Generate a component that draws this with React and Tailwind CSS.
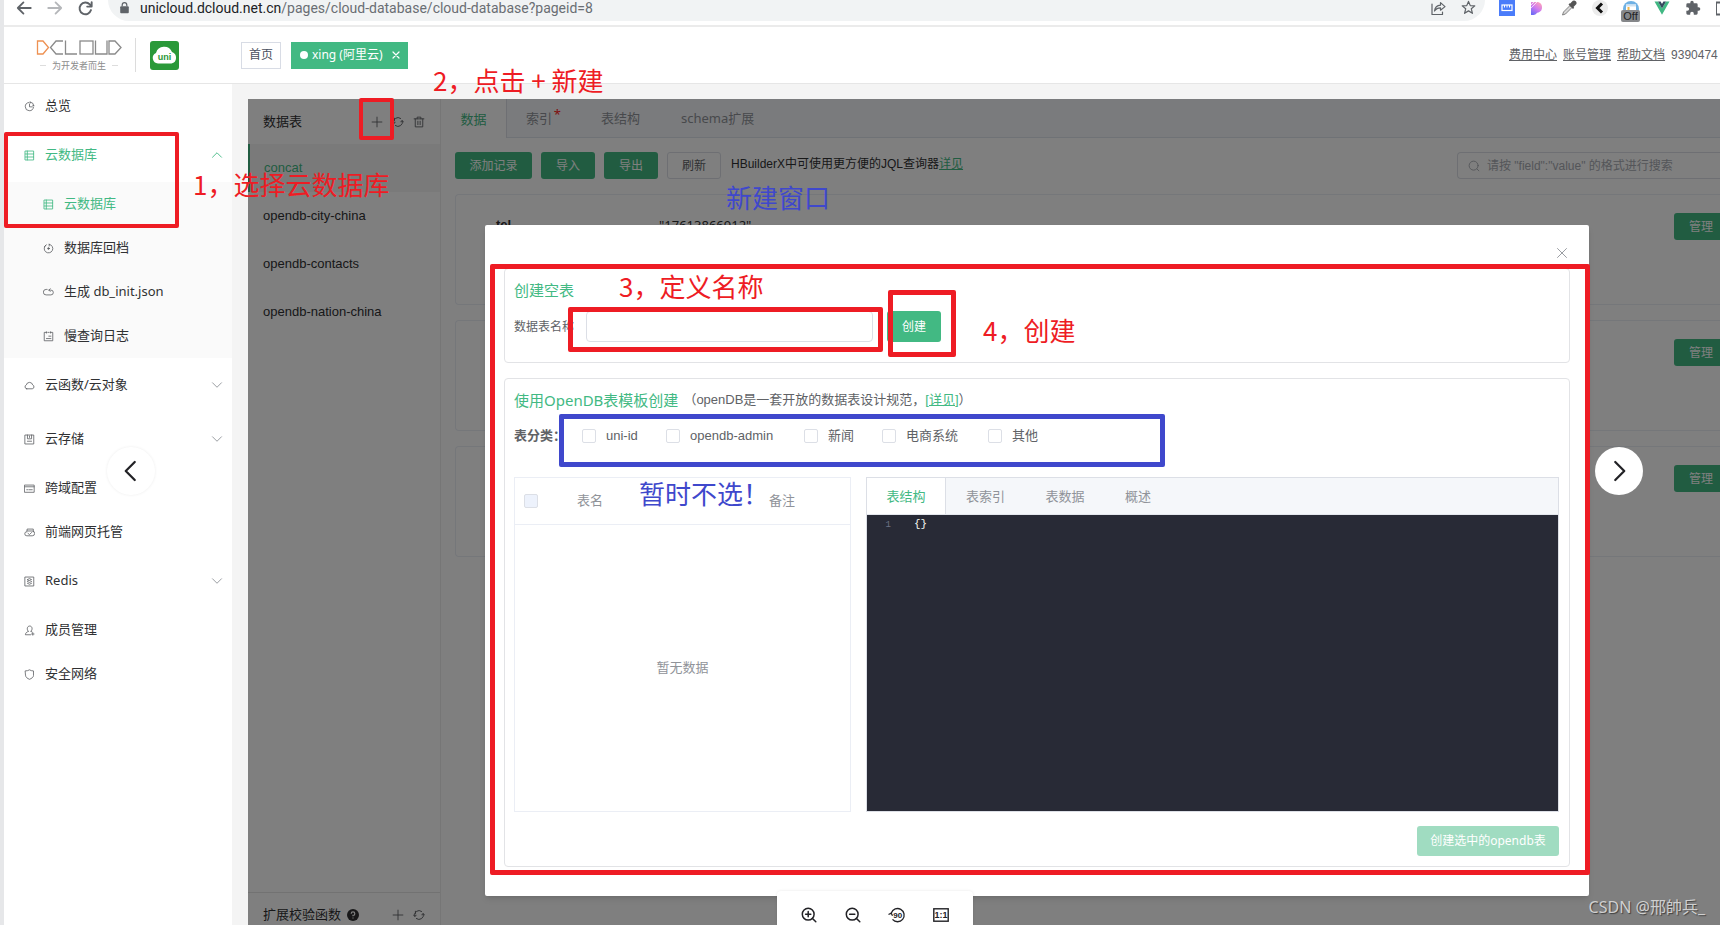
const cjk = `font-['Noto_Sans','Noto_Sans_CJK_SC',sans-serif]`;
const arial = `font-['Liberation_Sans','Noto_Sans_CJK_SC',sans-serif]`;

function Svg({ size = 'size-[12px]', sw = 1.2, box = 16, className = '', children }) {
  return (
    <svg viewBox={`0 0 ${box} ${box}`} className={`${size} shrink-0 ${className}`} fill="none" stroke="currentColor" strokeWidth={sw} strokeLinecap="round" strokeLinejoin="round" aria-hidden="true">
      {children}
    </svg>
  );
}

const icons = {
  clock: <><path d="M7 2.2A6 6 0 1 0 13.8 9" /><path d="M9 1.5A5.8 5.8 0 0 1 14.3 6.8" /><path d="M8 4.5V8.5H12" /><path d="M9 1.5V3M14.3 6.8H12.8" /></>,
  list: <><rect x="2" y="1.5" width="12" height="13" /><path d="M2 5.8H14M2 10.2H14M4.8 1.5V14.5" /></>,
  restore: <><path d="M4.6 2.7A6.3 6.3 0 1 0 9 1.8" /><path d="M9 1.8V4.4M2 5.5L4.5 3" /><circle cx="8" cy="8" r="1.2" fill="currentColor" /></>,
  loop: <><path d="M6 3.5H4.5A3.2 3.2 0 0 0 4.5 11.5H11.5A3.2 3.2 0 0 0 11.5 4.5H8.5" /><path d="M10.5 2.5L8.5 4.5L10.5 6.5" /></>,
  log: <><path d="M5 2H1.8V14.2H14.2V2H11M7 2H9" /><path d="M5 1.2V3M11 1.2V3M8.5 7.5H11.5M5 11H11.5" /></>,
  cloud: <path d="M4 12.8H12A2.9 2.9 0 0 0 12.6 7.2A4.7 4.7 0 0 0 3.4 7.2A2.9 2.9 0 0 0 4 12.8Z" />,
  storage: <><rect x="1.8" y="1.5" width="12.4" height="13" /><path d="M5 1.5V7H11V1.5M5 10.5H11M8 3V5" /></>,
  cross: <><rect x="1.2" y="3" width="13.6" height="10.5" /><path d="M1.2 5.5H14.8M4 9.8H5.2M7 9.8H12" /></>,
  host: <><path d="M4.5 5V3H13.5V7M4 5.8H12A2.8 2.8 0 0 1 12 12.8H4.2A3 3 0 0 1 4 6.8" /><path d="M5.8 9.3L8 11L11 8" /></>,
  redis: <><rect x="1.8" y="1.5" width="12.4" height="13" /><path d="M5 5.2L8 3.8L11 5.2L8 6.6ZM5 8L8 9.4L11 8M5 10.6L8 12L11 10.6" /></>,
  member: <><path d="M6.2 9.3C3.5 6.5 4.5 1.5 8.3 1.5S13 6.5 10.2 9.3" /><path d="M6.2 9.3C3.6 10.5 2.2 11.6 2 14.2H9.5M10.2 9.3L12 10.4M12.8 11.4V14.8M11 13.1H14.6" /></>,
  shield: <path d="M2.2 2.8Q5.5 2.8 8 1.2Q10.5 2.8 13.8 2.8V9.5C13.8 12 11 13.8 8 15C5 13.8 2.2 12 2.2 9.5Z" />,
};

function NavItem({ icon, label, parent, sub, active, open }) {
  return (
    <li>
      <a href="#" className={`flex items-center pr-[9px] text-[13px] ${parent ? 'h-[54px]' : 'h-[44px]'} ${sub ? 'pl-[39px]' : 'pl-[20px]'} ${active ? 'text-[#42b983]' : 'text-[#303133]'}`}>
        <Svg size="size-[11px]" className={active ? '' : 'text-[#606266]'}>{icons[icon]}</Svg>
        <span className="ml-[10px]">{label}</span>
        {parent && (
          <Svg size="size-[12px]" className={`ml-auto ${active ? '' : 'text-[#909399]'}`}>
            {open ? <path d="M2 11L8 5L14 11" /> : <path d="M2 5L8 11L14 5" />}
          </Svg>
        )}
      </a>
    </li>
  );
}

function BrowserBar() {
  return (
    <div className="flex h-[27px] shrink-0 items-start border-b-2 border-[#ebebeb] bg-white pl-[11px] text-[#5f6368]">
      <div className="flex h-[16px] items-center gap-[13px]">
        <button aria-label="后退"><Svg size="size-[18px]" sw={1.6}><path d="M14 8H2.5M7.5 3L2.5 8L7.5 13" /></Svg></button>
        <button aria-label="前进" className="text-[#b5b7ba]"><Svg size="size-[18px]" sw={1.6}><path d="M2 8H13.5M8.5 3L13.5 8L8.5 13" /></Svg></button>
        <button aria-label="刷新页面"><Svg size="size-[17px]" sw={1.8}><path d="M13.2 9.5A5.5 5.5 0 1 1 12 4.2L13.5 5.8M13.8 2V6.2H9.6" /></Svg></button>
      </div>
      <div className="ml-[14px] flex h-[21px] flex-1 items-start rounded-b-full bg-[#f1f3f4] pr-[9px] pl-[12px]">
        <svg viewBox="0 0 10 14" className="mt-[2px] h-[12px] w-[9px] fill-[#5f6368]" aria-hidden="true"><path d="M1 5H9A1 1 0 0 1 10 6V12A1 1 0 0 1 9 13H1A1 1 0 0 1 0 12V6A1 1 0 0 1 1 5Z" /><path d="M2.3 5V3.4A2.7 2.7 0 0 1 7.7 3.4V5" fill="none" stroke="#5f6368" strokeWidth="1.4" /></svg>
        <span className="ml-[11px] font-[Roboto,sans-serif] text-[14px] leading-[17px] text-[#6a6e73]"><span className="text-[#202124]">unicloud.dcloud.net.cn</span>/pages/cloud-database/cloud-database?pageid=8</span>
        <button aria-label="分享" className="ml-auto"><Svg size="size-[16px]" sw={1.2}><path d="M2 4V14.5H12.5V12" /><path d="M4.5 11C5 7 7.5 5.3 10.5 5.2V2.6L15 6.6L10.5 10.2V7.8C8 7.8 6 8.6 4.5 11Z" /></Svg></button>
        <button aria-label="收藏" className="ml-[15px]"><Svg size="size-[15px]" sw={1.3}><path d="M8 1.5L9.9 6L14.7 6.3L11 9.4L12.2 14.2L8 11.6L3.8 14.2L5 9.4L1.3 6.3L6.1 6Z" /></Svg></button>
      </div>
      <div className="ml-[14px] flex w-[221px] shrink-0 items-start gap-[15px] overflow-hidden">
        <svg viewBox="0 0 16 16" className="size-[16px] shrink-0" aria-hidden="true"><rect width="16" height="16" fill="#4a7cfa" /><rect x="3" y="5" width="10" height="5.5" fill="none" stroke="#fff" strokeWidth="1.2" /><path d="M5.5 5V7.5M8 5V7.5M10.5 5V7.5" stroke="#fff" /></svg>
        <svg viewBox="0 0 16 16" className="size-[16px] shrink-0" aria-hidden="true">
          <defs><linearGradient id="pg" x1="0.2" y1="1" x2="0.8" y2="0"><stop offset="0" stopColor="#6b6bf5" /><stop offset="0.5" stopColor="#d07bf0" /><stop offset="1" stopColor="#ffa6b8" /></linearGradient></defs>
          <path d="M1 2H8A5.6 5.6 0 0 1 8.5 12.6C6 12.6 6.5 15 3.5 15H1Z" fill="url(#pg)" /><path d="M1 5L4.5 1.5M1 8L7.5 1.5" stroke="#fff" strokeWidth="0.7" />
        </svg>
        <svg viewBox="0 0 16 16" className="size-[16px] shrink-0" aria-hidden="true"><path d="M1.5 15L2.5 12L9 5.5L11 7.5L4.5 14Z" fill="#d8d8d8" stroke="#777" strokeWidth="0.9" /><path d="M7.5 4.5L12 9L13.2 7.8L12.5 7L15.2 4.2A2.5 2.5 0 0 0 11.8 0.8L9.2 3.5L8.7 3.2Z" fill="#555" /></svg>
        <svg viewBox="0 0 16 16" className="size-[16px] shrink-0" aria-hidden="true"><circle cx="8" cy="8" r="8" fill="#ececec" /><path d="M10 3.5L5.5 8L10 12.5" fill="none" stroke="#111" strokeWidth="3" /></svg>
        <div className="relative h-[22px] w-[16px] shrink-0">
          <svg viewBox="0 0 16 16" className="size-[16px]" aria-hidden="true"><circle cx="8" cy="9" r="8" fill="#6fb1e4" /><rect x="3" y="4.5" width="10" height="8" fill="#fff" /><path d="M3 5.5H13" stroke="#cfe2f2" strokeWidth="2" /><rect x="4.5" y="7" width="2" height="3" fill="#f2b84b" /></svg>
          <span className={`absolute top-[10px] -left-[2px] w-[19px] rounded-[2px] bg-[#85878a] text-center text-[11px] leading-[12px] text-[#222] ${arial}`}>Off</span>
        </div>
        <svg viewBox="0 0 16 16" className="size-[16px] shrink-0" aria-hidden="true"><path d="M0.5 1.5H4L8 8.5L12 1.5H15.5L8 14.8Z" fill="#41b883" /><path d="M4 1.5H6.6L8 4L9.4 1.5H12L8 8.5Z" fill="#35495e" /></svg>
        <svg viewBox="0 0 24 24" className="size-[16px] shrink-0 fill-[#5f6368]" aria-hidden="true"><path d="M20.5 11H19V7a2 2 0 0 0-2-2h-4V3.5a2.5 2.5 0 0 0-5 0V5H4a2 2 0 0 0-2 2v3.8h1.5a2.7 2.7 0 0 1 0 5.4H2V20a2 2 0 0 0 2 2h3.8v-1.5a2.7 2.7 0 0 1 5.4 0V22H17a2 2 0 0 0 2-2v-4h1.5a2.5 2.5 0 0 0 0-5z" /></svg>
        <svg viewBox="0 0 16 16" className="size-[16px] shrink-0" aria-hidden="true"><rect x="0" y="2.5" width="13" height="12" fill="none" stroke="#5f6368" strokeWidth="2" /></svg>
      </div>
    </div>
  );
}

function Header() {
  return (
    <header className="flex h-[57px] shrink-0 items-center border-b border-[#e6e6e6] bg-white pl-[32px]">
      <div className="flex w-[86px] flex-col items-center">
        <svg viewBox="0 0 86 17" className="h-[17px] w-[86px]" fill="none" stroke="#8a8a8a" strokeWidth="1.3" aria-hidden="true">
          <path d="M1.5 2H7L12.5 8.5L7 15H1.5Z" stroke="#ee9152" />
          <path d="M27 2H20L14.5 8.5L20 15H27" /><path d="M29.5 1.5V15H41" /><rect x="44" y="2" width="13" height="13" /><path d="M59.5 1.5V15H71V1.5" /><path d="M73 15V2H79L85 8.5L79 15Z" />
        </svg>
        <div className={`mt-[3px] flex items-center gap-[6px] text-[9px] leading-[13px] text-[#8c8c8c] ${cjk}`}>
          <i className="h-px w-[6px] bg-[#ddd]" />为开发者而生<i className="h-px w-[6px] bg-[#ddd]" />
        </div>
      </div>
      <div className="ml-[13px] h-[34px] w-px bg-[#dcdcdc]" />
      <svg viewBox="0 0 29 29" className="ml-[14px] size-[29px]" aria-hidden="true">
        <rect width="29" height="29" rx="3" fill="#2a9939" />
        <path d="M8 22.5A5.5 5.5 0 0 1 6 12A8.5 8.5 0 0 1 22 11A6 6 0 0 1 21.5 22.5Z" fill="#fff" />
        <text x="14.5" y="19" textAnchor="middle" fontSize="9" fontWeight="700" fill="#2a9939" fontFamily="Liberation Sans, sans-serif">uni</text>
      </svg>
      <nav className="ml-[62px] flex gap-[10px] text-[12px]">
        <button className="h-[27px] w-[40px] border border-[#d8dce5] text-[#495060]">首页</button>
        <button className="flex h-[27px] w-[117px] items-center border border-[#42b983] bg-[#42b983] pl-[8px] text-white">
          <i className="mr-[4px] size-[8px] rounded-full bg-white" />xing (阿里云)
          <Svg size="size-[8px]" sw={2.4} className="ml-[9px]"><path d="M2 2L14 14M14 2L2 14" /></Svg>
        </button>
      </nav>
      <nav className="ml-auto flex w-[211px] shrink-0 gap-[6px] overflow-hidden text-[12px] whitespace-nowrap text-[#606266]">
        <a href="#" className="underline">费用中心</a>
        <a href="#" className="underline">账号管理</a>
        <a href="#" className="underline">帮助文档</a>
        <span className={arial}>9390474</span>
      </nav>
    </header>
  );
}

function Sidebar() {
  return (
    <aside className="w-[228px] shrink-0 bg-white">
      <ul>
        <NavItem icon="clock" label="总览" />
        <NavItem icon="list" label="云数据库" parent active open />
      </ul>
      <ul className="bg-[#fafafa]">
        <NavItem icon="list" label="云数据库" sub active />
        <NavItem icon="restore" label="数据库回档" sub />
        <NavItem icon="loop" label="生成 db_init.json" sub />
        <NavItem icon="log" label="慢查询日志" sub />
      </ul>
      <ul>
        <NavItem icon="cloud" label="云函数/云对象" parent />
        <NavItem icon="storage" label="云存储" parent />
        <NavItem icon="cross" label="跨域配置" />
        <NavItem icon="host" label="前端网页托管" />
        <NavItem icon="redis" label="Redis" parent />
        <NavItem icon="member" label="成员管理" />
        <NavItem icon="shield" label="安全网络" />
      </ul>
    </aside>
  );
}

const Plus = () => <Svg size="size-[12px]"><path d="M8 1.5V14.5M1.5 8H14.5" /></Svg>;
const Refresh = () => <Svg size="size-[12px]" sw={1.3}><path d="M2.2 9.5A6 6 0 0 1 11.5 3.2M13.8 6.5A6 6 0 0 1 4.5 12.8" /><path d="M3.2 3V6M0.8 8L2.2 9.8L4.2 8.6M15.2 8L13.8 6.2L11.8 7.4" /></Svg>;

function TableList() {
  return (
    <section className="flex w-[193px] shrink-0 flex-col border-r border-[#ececec] text-[13px] text-[#303133]">
      <div className="flex h-[45px] shrink-0 items-center pr-[15px] pl-[15px]">
        数据表
        <div className="ml-auto flex gap-[9px] text-[#606266]">
          <button aria-label="新建数据表"><Plus /></button>
          <button aria-label="刷新数据表"><Refresh /></button>
          <button aria-label="删除数据表"><Svg size="size-[12px]"><path d="M1.5 3.8H14.5M5.5 3.8V1.5H10.5V3.8M3 3.8V14.5H13V3.8M6.5 7V11.5M9.5 7V11.5" /></Svg></button>
        </div>
      </div>
      <ul className={`flex-1 ${arial}`}>
        <li><a href="#" className="flex h-[48px] items-center border-l-2 border-[#42b983] bg-[#f5f5f5] pl-[14px] text-[#42b983]">concat</a></li>
        {['opendb-city-china', 'opendb-contacts', 'opendb-nation-china'].map((n) => (
          <li key={n}><a href="#" className="flex h-[48px] items-center pl-[15px]">{n}</a></li>
        ))}
      </ul>
      <div className="flex h-[33px] shrink-0 items-center border-t border-[#e4e4e4] pt-[12px] pr-[15px] pl-[15px]">
        扩展校验函数
        <svg viewBox="0 0 16 16" className="ml-[6px] size-[12px]" aria-hidden="true"><circle cx="8" cy="8" r="8" fill="#303133" /><path d="M5.6 6.2A2.4 2.4 0 1 1 8 8.6V9.8M8 11.3V12.8" fill="none" stroke="#fff" strokeWidth="1.6" /></svg>
        <div className="ml-auto flex gap-[9px] text-[#606266]">
          <button aria-label="新建函数"><Plus /></button>
          <button aria-label="刷新函数"><Refresh /></button>
        </div>
      </div>
    </section>
  );
}

const green = 'h-[27px] rounded-[3px] bg-[#42b983] text-[12px] text-white';

function DataPanel() {
  return (
    <section className="flex min-w-0 flex-1 flex-col">
      <div role="tablist" className="flex h-[39px] shrink-0 border-b border-[#dfe4ed] bg-[#f5f7fa] text-[13px] text-[#909399]">
        <button role="tab" aria-selected="true" className="-mb-px w-[66px] border-r border-[#dcdfe6] bg-white pt-[2px] text-[#42b983]">数据</button>
        <button role="tab" className="relative ml-[19px] pt-[2px]">索引<span className="absolute top-[6px] -right-[9px] text-[#ff2020]">*</span></button>
        <button role="tab" className="ml-[49px] pt-[2px]">表结构</button>
        <button role="tab" className="ml-[41px] pt-[2px]">schema扩展</button>
      </div>
      <div className="flex flex-1 flex-col gap-[15px] overflow-hidden pt-[14px] pl-[14px]">
        <div className="flex h-[27px] shrink-0 gap-[9px]">
          <button className={`${green} w-[77px]`}>添加记录</button>
          <button className={`${green} w-[54px]`}>导入</button>
          <button className={`${green} w-[54px]`}>导出</button>
          <button className="h-[27px] w-[54px] rounded-[3px] border border-[#dcdfe6] text-[12px] text-[#606266]">刷新</button>
          <p className={`ml-[1px] text-[12px] leading-[24px] text-[#303133] ${arial}`}>HBuilderX中可使用更方便的JQL查询器<a href="#" className="text-[#42b983] underline">详见</a></p>
          <label className="ml-auto flex w-[263px] items-center rounded-l-[4px] border border-r-0 border-[#dcdfe6] pl-[10px] text-[#a8abb2]">
            <Svg size="size-[12px]"><circle cx="7.5" cy="7.5" r="6" /><path d="M12 12L14.5 14.5" /></Svg>
            <input aria-label="搜索" placeholder={'请按 "field":"value" 的格式进行搜索'} className={`ml-[7px] w-full bg-transparent text-[12px] outline-none placeholder:text-[#a8abb2] ${arial}`} />
          </label>
        </div>
        {[0, 1, 2].map((i) => (
          <article key={i} className="flex h-[111px] shrink-0 items-start justify-between rounded-l-[4px] border border-r-0 border-[#ebeef5] pt-[18px] pl-[40px] text-[13px]">
            <dl className="flex leading-[24px] text-[#303133]">
              {i === 0 && <><dt className={`w-[163px] font-bold ${arial}`}>tel</dt><dd>"17613866912"</dd></>}
            </dl>
            <button className="h-[27px] w-[46px] rounded-l-[3px] bg-[#42b983] pl-[15px] text-left text-[12px] text-white">管理</button>
          </article>
        ))}
      </div>
    </section>
  );
}

const check = 'size-[14px] shrink-0 appearance-none rounded-[2px] border border-[#dcdfe6]';

function Dialog() {
  const kinds = [['uni-id', 'w-[84px]'], ['opendb-admin', 'w-[138px]'], ['新闻', 'w-[78px]'], ['电商系统', 'w-[106px]'], ['其他', 'w-[60px]']];
  return (
    <div className="absolute inset-0 bg-black/50 pt-[126px] pr-[131px] pl-[237px]">
      <div role="dialog" aria-label="新建数据表" className="flex h-[671px] flex-col rounded-[2px] bg-white px-[19px] shadow-md">
        <div className="flex h-[43px] shrink-0 items-center justify-end pt-[12px]">
          <button aria-label="关闭" className="mr-[2px] text-[#909399]"><Svg size="size-[12px]"><path d="M2 2L14 14M14 2L2 14" /></Svg></button>
        </div>
        <section className="h-[95px] shrink-0 rounded-[4px] border border-[#e2e3e6] pt-[9px] pr-[10px] pl-[9px]">
          <h2 className="text-[15px] leading-[24px] text-[#42b983]">创建空表</h2>
          <div className="mt-[9px] flex h-[31px] items-center">
            <label htmlFor="tname" className="w-[72px] text-[12px] text-[#606266]">数据表名称</label>
            <input id="tname" className="h-[31px] w-[287px] rounded-[4px] border border-[#dcdfe6] px-[10px] text-[13px] outline-none" />
            <button className="ml-[14px] h-[31px] w-[54px] rounded-[3px] bg-[#42b983] text-[12px] text-white">创建</button>
          </div>
        </section>
        <section className="mt-[15px] flex h-[489px] shrink-0 flex-col rounded-[4px] border border-[#e2e3e6] pt-[9px] pr-[10px] pl-[9px]">
          <h2 className="flex gap-[5px] text-[15px] leading-[24px] text-[#42b983]">使用OpenDB表模板创建<span className={`text-[13px] text-[#606266] ${arial}`}>（openDB是一套开放的数据表设计规范，<a href="#" className="text-[#42b983] underline">[详见]</a>）</span></h2>
          <fieldset className="mt-[14px] flex h-[20px] items-center text-[13px] text-[#606266]">
            <legend className="float-left w-[68px] font-bold">表分类：</legend>
            {kinds.map(([k, w]) => (
              <label key={k} className={`flex items-center gap-[10px] whitespace-nowrap ${w} ${arial}`}><input type="checkbox" className={check} />{k}</label>
            ))}
          </fieldset>
          <div className="mt-[31px] flex h-[335px] gap-[15px]">
            <div className="flex w-[337px] shrink-0 flex-col border border-[#ebeef5]">
              <table className="w-full table-fixed text-left text-[13px] text-[#909399]">
                <thead><tr className="h-[46px] border-b border-[#ebeef5]">
                  <th className="w-[62px] pl-[9px]"><input type="checkbox" disabled aria-label="全选" className="block size-[14px] appearance-none rounded-[2px] border border-[#dcdfe6] bg-[#edf2fc]" /></th>
                  <th className="w-[192px] font-normal">表名</th><th className="font-normal">备注</th>
                </tr></thead>
              </table>
              <p className="flex flex-1 items-center justify-center text-[13px] text-[#909399]">暂无数据</p>
            </div>
            <div className="flex min-w-0 flex-1 flex-col border border-[#dcdfe6]">
              <div role="tablist" className="flex h-[37px] shrink-0 border-b border-[#e4e7ed] bg-[#f5f7fa] text-[13px] text-[#909399]">
                <button role="tab" aria-selected="true" className="w-[79px] border-r border-[#dcdfe6] bg-white pt-[2px] text-[#42b983]">表结构</button>
                <button role="tab" className="w-[79px] pt-[2px]">表索引</button>
                <button role="tab" className="w-[80px] pt-[2px]">表数据</button>
                <button role="tab" className="w-[66px] pt-[2px]">概述</button>
              </div>
              <pre className="flex-1 bg-[#282a36] font-['Liberation_Mono',monospace] text-[11px] leading-[19px] text-[#f8f8f2]"><span className="inline-block w-[24px] text-right text-[9px] text-[#6d7285]">1</span><code className="ml-[23px]">{'{}'}</code></pre>
            </div>
          </div>
          <button className="mt-[14px] h-[30px] w-[142px] self-end rounded-[3px] bg-[#a0dcc1] text-[12px] text-white">创建选中的opendb表</button>
        </section>
      </div>
    </div>
  );
}

function Note({ className, children }) {
  return <p className={`absolute font-['Noto_Sans_CJK_SC',sans-serif] text-[26px] leading-[32px] whitespace-nowrap ${className}`}>{children}</p>;
}

function Annotations() {
  return (
    <div className="pointer-events-none absolute inset-0">
      <div className="absolute top-[132px] left-[4px] h-[96px] w-[175px] rounded-[2px] border-[4px] border-[#ee1c24]" />
      <div className="absolute top-[98px] left-[359px] h-[42px] w-[35px] rounded-[2px] border-[4px] border-[#ee1c24]" />
      <div className="absolute top-[264px] right-[130px] left-[490px] h-[611px] rounded-[2px] border-[5px] border-[#ee1c24]" />
      <div className="absolute top-[307px] left-[568px] h-[45px] w-[315px] rounded-[2px] border-[5px] border-[#ee1c24]" />
      <div className="absolute top-[290px] left-[888px] h-[67px] w-[68px] rounded-[2px] border-[5px] border-[#ee1c24]" />
      <div className="absolute top-[414px] left-[559px] h-[53px] w-[606px] rounded-[2px] border-[5px] border-[#3f48cc]" />
      <Note className="top-[168px] left-[193px] text-[#ee1c24]">1，选择云数据库</Note>
      <Note className="top-[64px] left-[433px] text-[#ee1c24]">2，点击 + 新建</Note>
      <Note className="top-[270px] left-[619px] text-[#ee1c24]">3，定义名称</Note>
      <Note className="top-[314px] left-[983px] text-[#ee1c24]">4，创建</Note>
      <Note className="top-[181px] left-[726px] text-[#3f48cc]">新建窗口</Note>
      <Note className="top-[477px] left-[639px] text-[#3f48cc]">暂时不选！</Note>
    </div>
  );
}

function Viewer() {
  const round = 'absolute top-[447px] flex size-[48px] items-center justify-center rounded-full bg-white text-[#222226]';
  return (
    <>
      <button aria-label="上一张" className={`${round} left-[107px] shadow-[0_0_3px_rgba(0,0,0,0.08)]`}><Svg size="size-[24px]" sw={1.5}><path d="M10.5 2L4.5 8L10.5 14" /></Svg></button>
      <button aria-label="下一张" className={`${round} right-[77px]`}><Svg size="size-[24px]" sw={1.5}><path d="M5.5 2L11.5 8L5.5 14" /></Svg></button>
      <div className="absolute bottom-0 left-[777px] flex h-[34px] w-[196px] items-center gap-[28px] rounded-t-[4px] bg-white pt-[13px] pl-[24px] text-[#222226] shadow-[0_0_3px_rgba(0,0,0,0.1)]">
        <button aria-label="放大"><Svg size="size-[16px]" sw={1.5}><circle cx="7.2" cy="7.2" r="5.9" /><path d="M11.5 11.5L14.8 14.8M7.2 4.6V9.8M4.6 7.2H9.8" /></Svg></button>
        <button aria-label="缩小"><Svg size="size-[16px]" sw={1.5}><circle cx="7.2" cy="7.2" r="5.9" /><path d="M11.5 11.5L14.8 14.8M4.6 7.2H9.8" /></Svg></button>
        <button aria-label="旋转90度">
          <svg viewBox="0 0 16 16" className="size-[16px] overflow-visible" fill="none" stroke="currentColor" strokeWidth="1.3" aria-hidden="true"><path d="M2.3 6A6.6 6.6 0 1 1 3.5 12.4" /><path d="M-0.5 7.5L2.2 6.2L3.5 8.8" /><text x="8.8" y="11.2" textAnchor="middle" fontSize="8" fontWeight="700" fill="currentColor" stroke="none" fontFamily="Liberation Sans, sans-serif">90</text></svg>
        </button>
        <button aria-label="原始尺寸">
          <svg viewBox="0 0 16 16" className="size-[16px]" fill="none" stroke="currentColor" strokeWidth="1.4" aria-hidden="true"><rect x="0.8" y="1.8" width="14.4" height="12.4" /><text x="8" y="11.2" textAnchor="middle" fontSize="9" fontWeight="700" fill="currentColor" stroke="none" fontFamily="Liberation Sans, sans-serif">1:1</text></svg>
        </button>
      </div>
      <p className="absolute right-[15px] bottom-[6px] text-[16px] leading-[24px] text-[#d0d0d0] [text-shadow:1px_1px_1px_rgba(0,0,0,0.5)]">CSDN @邢帥兵_</p>
    </>
  );
}

export default function App() {
  return (
    <div className={`relative flex h-screen flex-col overflow-hidden border-l-4 border-[#e6e7e9] bg-[#f4f4f4] ${cjk}`}>
      <BrowserBar />
      <Header />
      <div className="flex min-h-0 flex-1">
        <Sidebar />
        <main className="relative mt-[15px] ml-[16px] flex min-w-0 flex-1 bg-white">
          <TableList />
          <DataPanel />
          <Dialog />
        </main>
      </div>
      <div className="absolute inset-0 -ml-[4px]">
        <Annotations />
        <Viewer />
      </div>
    </div>
  );
}
